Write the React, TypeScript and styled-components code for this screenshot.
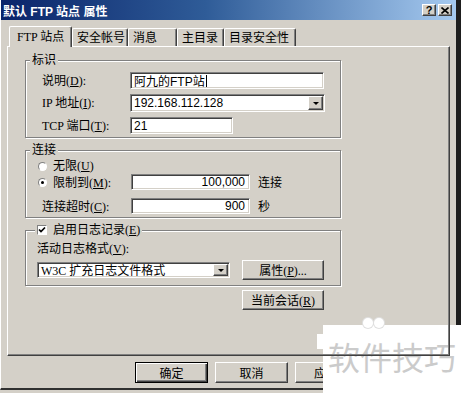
import React from 'react';
import styled, { createGlobalStyle, css } from 'styled-components';

const GlobalStyle = createGlobalStyle`
	html, body {
		margin: 0;
		padding: 0;
		background: #d4d0c8;
	}
	body {
		font-family: "Liberation Serif", "Noto Sans CJK SC", serif;
		font-size: 12px;
		color: #000;
	}
`;

const raised = css`
	border: 1px solid;
	border-color: #fff #404040 #404040 #fff;
	box-shadow: inset -1px -1px #808080;
	background: #d4d0c8;
`;

const sunken = css`
	border: 1px solid;
	border-color: #808080 #fff #fff #808080;
	box-shadow: inset 1px 1px #404040, inset -1px -1px #d4d0c8;
	background: #fff;
`;

export default function App() {
	return (
		<Page>
			<GlobalStyle />
			<Window>
				<TitleBar>
					<Title>默认 FTP 站点 属性</Title>
					<CaptionButtons>
						<CaptionButton>?</CaptionButton>
						<CaptionButton>
							<svg width="8" height="7" viewBox="0 0 8 7">
								<path d="M0.5 0.5 L7.5 6.5 M7.5 0.5 L0.5 6.5" stroke="#000" strokeWidth="1.6" />
							</svg>
						</CaptionButton>
					</CaptionButtons>
				</TitleBar>

				<Body>
					<TabStrip>
						<Tab $active $w={63}>FTP 站点</Tab>
						<Tab $w={56}>安全帐号</Tab>
						<Tab $w={49}>消息</Tab>
						<Tab $w={47}>主目录</Tab>
						<Tab $w={72}>目录安全性</Tab>
					</TabStrip>

					<Panel>
						<GroupBox $h={78} $pt={11} $pl={16}>
							<Caption>标识</Caption>
							<FormGrid>
								<Label>说明(<u>D</u>):</Label>
								<Field $w={194}>
									阿九的FTP站<Caret />
								</Field>
								<Label>IP 地址(<u>I</u>):</Label>
								<Combo $w={195} $h={18}>
									<span>192.168.112.128</span>
									<DropButton><Arrow /></DropButton>
								</Combo>
								<Label>TCP 端口(<u>T</u>):</Label>
								<Field $w={103}>21</Field>
							</FormGrid>
						</GroupBox>

						<GroupBox $h={68} $pt={8} $pl={12}>
							<Caption>连接</Caption>
							<OptionRow>
								<Radio />
								<span>无限(<u>U</u>)</span>
							</OptionRow>
							<FieldRow $mt={1}>
								<RowLabel>
									<Radio $checked />
									<span>限制到(<u>M</u>):</span>
								</RowLabel>
								<Field $w={119} $h={16} $right>100,000</Field>
								<Unit>连接</Unit>
							</FieldRow>
							<FieldRow $mt={8}>
								<RowLabel $indent={4}>
									<span>连接超时(<u>C</u>):</span>
								</RowLabel>
								<Field $w={119} $h={16} $right>900</Field>
								<Unit>秒</Unit>
							</FieldRow>
						</GroupBox>

						<GroupBox $h={56} $pt={11} $pl={11}>
							<Caption $left={9}>
								<CheckBox>
									<svg width="8" height="8" viewBox="0 0 8 8">
										<path d="M1 3.5 L3 5.5 L7 1.5" stroke="#000" strokeWidth="1.7" fill="none" />
									</svg>
								</CheckBox>
								<span>启用日志记录(<u>E</u>)</span>
							</Caption>
							<OptionRow>
								<span>活动日志格式(<u>V</u>):</span>
							</OptionRow>
							<FieldRow $mt={4} $h={20}>
								<Combo $w={193} $h={16} $serif>
									<span>W3C 扩充日志文件格式</span>
									<DropButton><Arrow /></DropButton>
								</Combo>
								<Button $w={82} $h={20} $ml={12}>属性(<u>P</u>)...</Button>
							</FieldRow>
						</GroupBox>

						<SessionRow>
							<Button $w={82} $h={20}>当前会话(<u>R</u>)</Button>
						</SessionRow>
					</Panel>

					<Footer>
						<Button $w={73} $h={21} $default>确定</Button>
						<Button $w={73} $h={21}>取消</Button>
						<Button $w={73} $h={21}>应</Button>
					</Footer>
				</Body>
			</Window>

			<Watermark>
				<Bump $x={40} />
				<Bump $x={51} />
				软件技巧
			</Watermark>
		</Page>
	);
}

const Page = styled.div`
	position: relative;
	width: 461px;
	height: 393px;
	overflow: hidden;
	background: #d4d0c8;
`;

const Window = styled.div`
	box-sizing: border-box;
	width: 461px;
	height: 390px;
	border-left: 1px solid #fff;
	border-right: 5px solid #1e1e1e;
	border-bottom: 2px solid #303030;
	display: flex;
	flex-direction: column;
`;

const TitleBar = styled.div`
	box-sizing: border-box;
	height: 20px;
	padding: 0 4px 0 2px;
	display: flex;
	align-items: center;
	justify-content: space-between;
	background: linear-gradient(to right, #0a246a 0%, #2f5c98 45%, #a6caf0 100%);
`;

const Title = styled.div`
	color: #fff;
	font-weight: bold;
	font-family: "Liberation Sans", "Noto Sans CJK SC", sans-serif;
	font-size: 12px;
	white-space: nowrap;
`;

const CaptionButtons = styled.div`
	display: flex;
	gap: 2px;
`;

const CaptionButton = styled.div`
	${raised};
	box-sizing: border-box;
	width: 14px;
	height: 12px;
	display: flex;
	align-items: center;
	justify-content: center;
	font: bold 11px "Liberation Sans", sans-serif;
	line-height: 10px;
`;

const Body = styled.div`
	flex: 1;
	padding: 6px 0 0 6px;
	display: flex;
	flex-direction: column;
`;

const TabStrip = styled.div`
	height: 20px;
	padding-left: 2px;
	display: flex;
	align-items: flex-end;
`;

const Tab = styled.div<{ $active?: boolean; $w: number }>`
	box-sizing: border-box;
	position: relative;
	width: ${(p) => p.$w}px;
	height: ${(p) => (p.$active ? 21 : 18)}px;
	margin-bottom: ${(p) => (p.$active ? -1 : 0)}px;
	z-index: ${(p) => (p.$active ? 2 : 0)};
	padding: ${(p) => (p.$active ? '3px 0 0 7px' : '2px 0 0 4px')};
	border-top: 1px solid #fff;
	border-left: 1px solid #fff;
	border-right: 1px solid #404040;
	border-radius: 2px 2px 0 0;
	box-shadow: inset -1px 0 #808080;
	background: #d4d0c8;
	line-height: 14px;
	white-space: nowrap;
`;

const Panel = styled.div`
	box-sizing: border-box;
	position: relative;
	z-index: 1;
	width: 443px;
	height: 310px;
	padding-left: 17px;
	border: 1px solid;
	border-color: #fff #404040 #404040 #fff;
	box-shadow: inset -1px -1px #808080;
	display: flex;
	flex-direction: column;
	align-items: flex-start;
`;

const GroupBox = styled.div<{ $h: number; $pt: number; $pl: number }>`
	box-sizing: border-box;
	position: relative;
	width: 316px;
	height: ${(p) => p.$h}px;
	margin-top: 12px;
	padding: ${(p) => p.$pt}px 0 0 ${(p) => p.$pl}px;
	border: 1px solid #808080;
	box-shadow: 1px 1px 0 #fff, inset 1px 1px 0 #fff;

	&:first-child {
		margin-top: 13px;
	}
`;

const Caption = styled.div<{ $left?: number }>`
	position: absolute;
	top: -8px;
	left: ${(p) => p.$left ?? 4}px;
	padding: 0 2px;
	height: 14px;
	line-height: 14px;
	background: #d4d0c8;
	display: flex;
	align-items: center;
	gap: 6px;
	white-space: nowrap;
`;

const FormGrid = styled.div`
	display: grid;
	grid-template-columns: 88px auto;
	grid-auto-rows: min-content;
	row-gap: 5px;
	align-items: center;
	justify-items: start;
`;

const Label = styled.div`
	white-space: nowrap;
	line-height: 14px;
`;

const Field = styled.div<{ $w: number; $h?: number; $right?: boolean }>`
	${sunken};
	box-sizing: border-box;
	width: ${(p) => p.$w}px;
	height: ${(p) => p.$h ?? 17}px;
	padding: 0 4px 0 3px;
	display: flex;
	align-items: center;
	justify-content: ${(p) => (p.$right ? 'flex-end' : 'flex-start')};
	font-family: "Liberation Sans", "Noto Sans CJK SC", sans-serif;
	font-size: 12px;
	white-space: nowrap;
`;

const Caret = styled.span`
	display: inline-block;
	width: 1px;
	height: 12px;
	margin-left: 1px;
	background: #000;
`;

const Combo = styled.div<{ $w: number; $h: number; $serif?: boolean }>`
	${sunken};
	box-sizing: border-box;
	width: ${(p) => p.$w}px;
	height: ${(p) => p.$h}px;
	padding: 1px 1px 1px 3px;
	display: flex;
	align-items: center;
	justify-content: space-between;
	font-family: ${(p) =>
		p.$serif
			? '"Liberation Serif", "Noto Sans CJK SC", serif'
			: '"Liberation Sans", "Noto Sans CJK SC", sans-serif'};
	font-size: 12px;
	white-space: nowrap;
`;

const DropButton = styled.div`
	${raised};
	box-sizing: border-box;
	width: 15px;
	height: 100%;
	display: flex;
	align-items: center;
	justify-content: center;
`;

const Arrow = styled.span`
	width: 0;
	height: 0;
	border-left: 3px solid transparent;
	border-right: 3px solid transparent;
	border-top: 3px solid #000;
`;

const OptionRow = styled.div`
	height: 14px;
	display: flex;
	align-items: center;
	gap: 6px;
	line-height: 14px;
	white-space: nowrap;
`;

const FieldRow = styled.div<{ $mt: number; $h?: number }>`
	margin-top: ${(p) => p.$mt}px;
	height: ${(p) => p.$h ?? 16}px;
	display: flex;
	align-items: center;
`;

const RowLabel = styled.div<{ $indent?: number }>`
	width: 93px;
	padding-left: ${(p) => p.$indent ?? 0}px;
	box-sizing: border-box;
	display: flex;
	align-items: center;
	gap: 6px;
	white-space: nowrap;
`;

const Unit = styled.span`
	margin-left: 8px;
`;

const Radio = styled.span<{ $checked?: boolean }>`
	box-sizing: border-box;
	width: 9px;
	height: 9px;
	border-radius: 50%;
	border: 1px solid;
	border-color: #808080 #fff #fff #808080;
	background: #fff;
	display: flex;
	align-items: center;
	justify-content: center;
	flex-shrink: 0;

	&::after {
		content: '';
		width: 3px;
		height: 3px;
		border-radius: 50%;
		background: ${(p) => (p.$checked ? '#000' : 'transparent')};
	}
`;

const CheckBox = styled.span`
	box-sizing: border-box;
	width: 10px;
	height: 10px;
	border: 1px solid;
	border-color: #808080 #fff #fff #808080;
	background: #fff;
	display: flex;
	align-items: center;
	justify-content: center;
`;

const Button = styled.button<{ $w: number; $h: number; $ml?: number; $default?: boolean }>`
	${raised};
	box-sizing: border-box;
	width: ${(p) => p.$w}px;
	height: ${(p) => p.$h}px;
	margin-left: ${(p) => p.$ml ?? 0}px;
	padding: 0;
	font-family: "Liberation Serif", "Noto Sans CJK SC", serif;
	font-size: 12px;
	color: #000;
	white-space: nowrap;

	${(p) =>
		p.$default &&
		css`
			border: 1px solid #000;
			box-shadow: inset 1px 1px #fff, inset -1px -1px #404040, inset -2px -2px #808080;
		`}
`;

const SessionRow = styled.div`
	width: 316px;
	margin-top: 4px;
	padding-right: 17px;
	box-sizing: border-box;
	display: flex;
	justify-content: flex-end;
`;

const Footer = styled.div`
	width: 443px;
	margin-top: 6px;
	padding-right: 82px;
	box-sizing: border-box;
	display: flex;
	justify-content: flex-end;
	gap: 7px;

	& > button:last-child {
		text-align: left;
		padding-left: 18px;
	}
`;

const Watermark = styled.div`
	position: absolute;
	left: 323px;
	top: 325px;
	right: 0;
	bottom: 0;
	box-sizing: border-box;
	padding: 13px 0 0 5px;
	background: #fff;
	color: #cbcbcb;
	font-family: "Noto Sans CJK SC", sans-serif;
	font-size: 32px;
	line-height: 36px;
	white-space: nowrap;

	&::before {
		content: '';
		position: absolute;
		left: -6px;
		top: 9px;
		width: 6px;
		height: 15px;
		background: #fff;
	}
`;

const Bump = styled.span<{ $x: number }>`
	position: absolute;
	left: ${(p) => p.$x}px;
	top: -7px;
	width: 10px;
	height: 10px;
	border-radius: 50%;
	background: #fff;
	box-shadow: 0 0 0 1px #e0e0e0;
`;
